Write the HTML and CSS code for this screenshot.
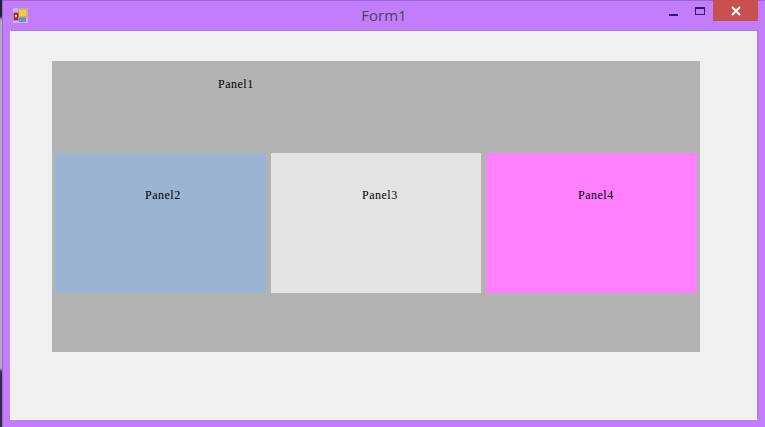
FILE: index.html
```html
<!DOCTYPE html>
<html lang="en">
<head>
  <meta charset="UTF-8" />
  <title>Form1</title>
  <link rel="stylesheet" href="styles.css">
</head>
<body>
  <div class="window">
    <!-- Title bar -->
    <div class="titlebar">
      <div class="title-left">
        <svg class="app-icon" width="15" height="15" viewBox="0 0 15 15">
          <rect x="0" y="0" width="15" height="15" fill="#cdb4e8"/>
          <rect x="5.5" y="1" width="8.5" height="8" fill="#f2c94c" stroke="#b08a30" stroke-width="0.6"/>
          <rect x="1" y="5" width="4" height="7" fill="#c4283a" stroke="#7a2030" stroke-width="0.6"/>
          <rect x="2" y="7" width="2" height="2" fill="#f0c8c8"/>
          <rect x="6.5" y="10" width="6" height="3.5" fill="#5a9fd0" stroke="#3f7299" stroke-width="0.5"/>
        </svg>
      </div>
      <div class="title-text">Form1</div>
      <div class="title-buttons">
        <div class="btn-min"></div>
        <div class="btn-max"></div>
        <div class="btn-close">
          <svg width="12" height="10" viewBox="0 0 12 10">
            <path d="M2 1 L10 9 M10 1 L2 9" stroke="#fff" stroke-width="2" fill="none"/>
          </svg>
        </div>
      </div>
    </div>

    <!-- Client area -->
    <div class="client">
      <div class="panel1">
        <div class="panel1-head"><span class="caption">Panel1</span></div>
        <div class="panel-row">
          <div class="panel panel2"><span class="caption">Panel2</span></div>
          <div class="panel panel3"><span class="caption">Panel3</span></div>
          <div class="panel panel4"><span class="caption">Panel4</span></div>
        </div>
      </div>
    </div>
  </div>
</body>
</html>
```

FILE: styles.css
```css
:root {
  --frame: #c27cfc;
  --frame-dark: #9c66cc;
  --client: #f0f0f0;
  --grey: #b3b3b3;
}
* { box-sizing: border-box; }
html, body { height: 100%; }
body {
  margin: 0;
  height: 427px;
  overflow: hidden;
  display: flex;
  padding-left: 2px;
  background: linear-gradient(to bottom, #1c2238 0, #1c2238 16px, #b4a8c4 20px, #b4a8c4 368px, #332a4c 372px, #332a4c 100%);
}

/* ===== Window ===== */
.window {
  flex: 1;
  min-width: 0;
  display: flex;
  flex-direction: column;
  background: var(--frame);
  border: 1px solid var(--frame-dark);
  border-right-color: var(--frame);
  border-bottom: none;
  padding: 0 6px 7px 7px;
}

/* ===== Title bar ===== */
.titlebar {
  height: 29px;
  display: grid;
  grid-template-columns: 1fr auto 1fr;
  flex: 0 0 auto;
}
.title-left { display: flex; align-items: flex-start; padding: 7px 0 0 3px; }
.title-text {
  font-family: "Open Sans", sans-serif;
  font-size: 15px;
  color: #4a4458;
  line-height: 29px;
}
.title-buttons { display: flex; justify-content: flex-end; align-items: flex-start; margin-top: -1px; }
.btn-min { width: 9px; height: 2px; background: #2e1a66; margin: 14px 17px 0 0; }
.btn-max { width: 10px; height: 8px; border: 1px solid #2e1a66; border-top-width: 2px; margin: 7px 8px 0 0; }
.btn-close {
  width: 45px;
  height: 21px;
  background: #c75050;
  display: flex;
  align-items: center;
  justify-content: center;
}

/* ===== Client ===== */
.client {
  flex: 1;
  background: var(--client);
  border: 1px solid var(--frame-dark);
  border-color: #a77fd0 #a77fd0 #f8f8f8 #f8f8f8;
  padding: 30px 57px 0 41px;
}
.panel1 {
  height: 291px;
  background: var(--grey);
  padding: 0 3px;
}
.panel1-head { height: 92px; padding: 17px 0 0 163px; }
.panel-row { display: grid; grid-template-columns: 211px 210px 211px; gap: 5px; }
.panel { height: 140px; padding-top: 36px; }
.panel2 { background: #9ab4d1; padding-left: 90px; }
.panel3 { background: #e3e3e3; padding-left: 91px; }
.panel4 { background: #ff80ff; padding-left: 92px; }
.caption {
  display: block;
  font-family: "Liberation Serif", serif;
  font-size: 12px;
  line-height: 12px;
  letter-spacing: 0.5px;
  color: #000;
}
```
